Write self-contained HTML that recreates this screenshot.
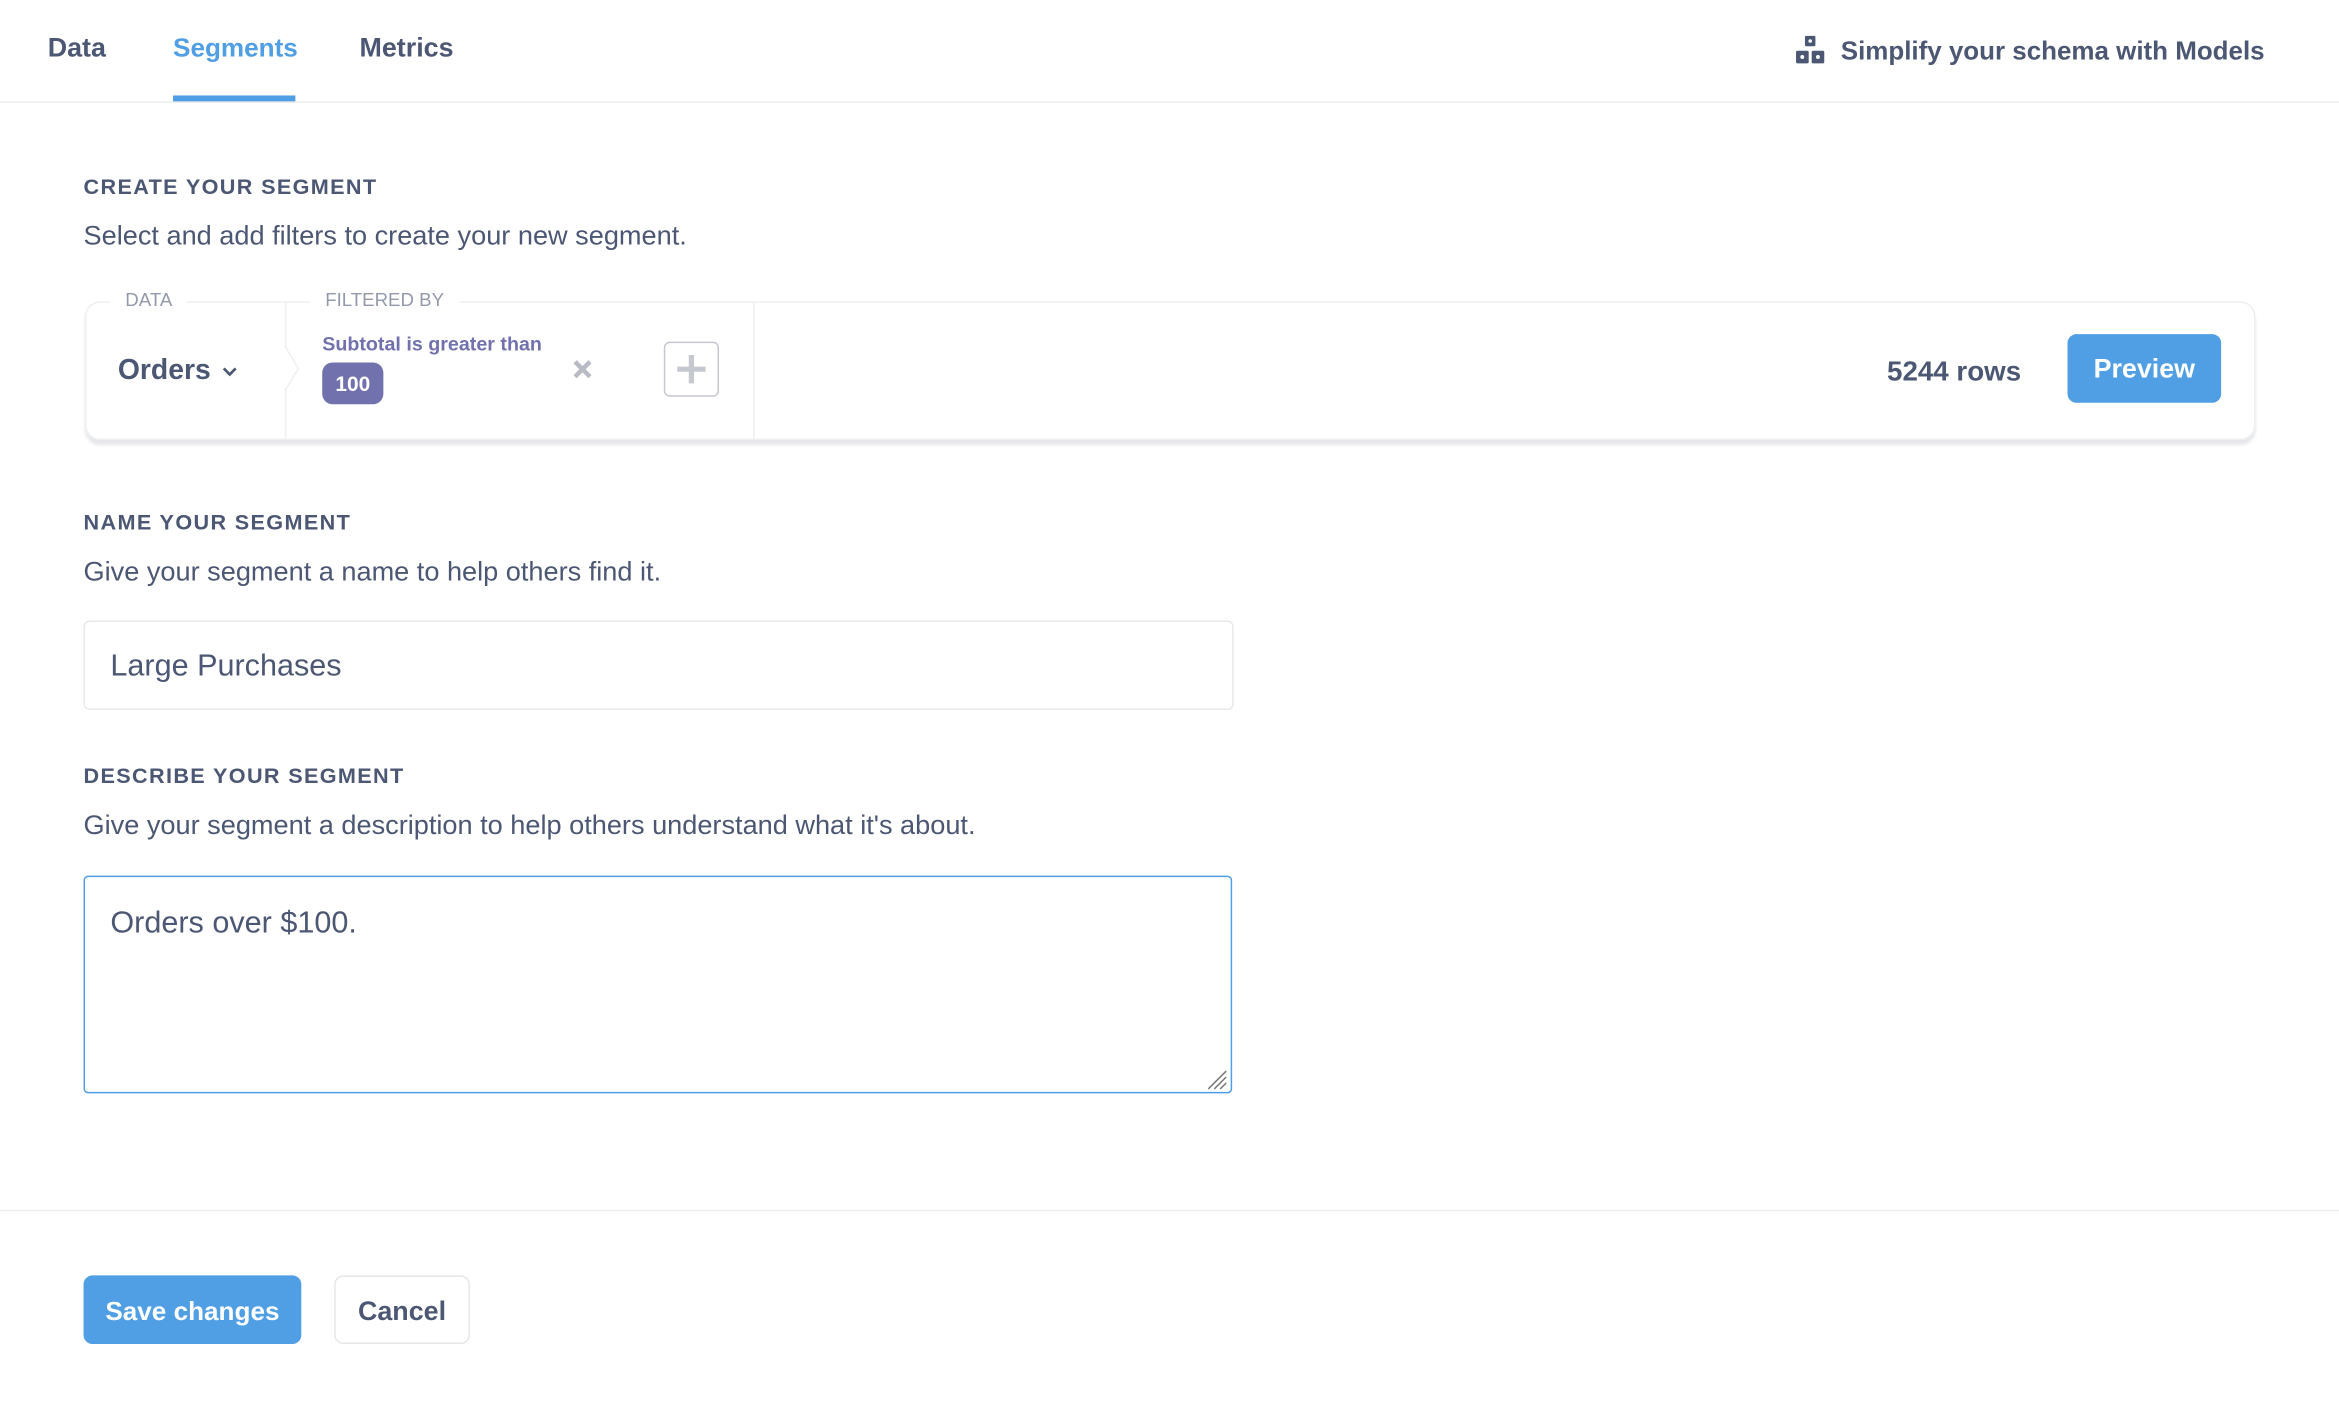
<!DOCTYPE html>
<html><head><meta charset="utf-8"><style>
html,body{margin:0;padding:0;background:#fff;overflow:hidden;width:2339px;height:1410px}
#w{position:absolute;left:0;top:0;width:1568px;height:946px;transform:scale(1.49171);transform-origin:0 0;font-family:"Liberation Sans",sans-serif;color:#4c5773}
.a{position:absolute;white-space:nowrap}
.t{font-size:18px;font-weight:bold;top:22px}
.h{font-size:14.5px;font-weight:bold;letter-spacing:0.9px;left:56px}
.d{font-size:18.2px;left:56px}
.lbl{font-size:12.5px;color:#949aab;background:#fff;padding:0 10px;top:194px}
</style></head><body><div id="w">
<div class="a t" style="left:32px">Data</div>
<div class="a t" style="left:116px;color:#509ee3;font-size:17.5px">Segments</div>
<div class="a" style="left:116px;top:64px;width:82px;height:4px;background:#509ee3"></div>
<div class="a t" style="left:241px">Metrics</div>
<svg class="a" style="left:1204px;top:24px" width="19" height="19" viewBox="0 0 19 19"><rect x="6" y="0" width="7" height="7" rx="1" fill="#4c5773"/><rect x="0" y="10" width="8.5" height="8.5" rx="1" fill="#4c5773"/><rect x="10.5" y="10" width="8.5" height="8.5" rx="1" fill="#4c5773"/><circle cx="9.5" cy="3.5" r="1.2" fill="#fff"/><circle cx="4.2" cy="14.2" r="1.3" fill="#fff"/><circle cx="14.7" cy="14.2" r="1.3" fill="#fff"/></svg>
<div class="a" style="left:1234px;top:24px;font-size:17.4px;font-weight:bold">Simplify your schema with Models</div>
<div class="a" style="left:0;top:68px;width:1568px;height:1px;background:#eceef0"></div>

<div class="a h" style="top:118px">CREATE YOUR SEGMENT</div>
<div class="a d" style="top:148px">Select and add filters to create your new segment.</div>

<div class="a" style="left:57px;top:202px;width:1453px;height:91px;border:1px solid #eeeff1;border-radius:10px;box-shadow:0 3px 2px #e6e7ea"></div>
<div class="a" style="left:191px;top:202px;width:1px;height:92px;background:#eeeff1"></div>
<div class="a" style="left:505px;top:202px;width:1px;height:92px;background:#eeeff1"></div>
<svg class="a" style="left:190px;top:232px" width="12" height="30"><path d="M1 0 L10 15 L1 30" fill="#fff" stroke="#eeeff1"/></svg>
<div class="a lbl" style="left:74px">DATA</div>
<div class="a lbl" style="left:208px">FILTERED BY</div>
<div class="a" style="left:79px;top:238px;font-size:19px;font-weight:bold">Orders</div>
<svg class="a" style="left:149px;top:246px" width="10" height="7"><path d="M1 1 L5 5 L9 1" fill="none" stroke="#4c5773" stroke-width="1.8"/></svg>
<div class="a" style="left:216px;top:223px;font-size:13.2px;font-weight:bold;color:#7172ad">Subtotal is greater than</div>
<div class="a" style="left:216px;top:243px;width:41px;height:28px;border-radius:7px;background:#7172ad;color:#fff;font-size:14px;font-weight:bold;text-align:center;line-height:28px">100</div>
<svg class="a" style="left:384px;top:241px" width="13" height="13"><path d="M1.5 1.5 L11.5 11.5 M11.5 1.5 L1.5 11.5" stroke="#b8bbc3" stroke-width="3"/></svg>
<div class="a" style="left:445px;top:229px;width:35px;height:35px;border:1.5px solid #c5c8cf;border-radius:4px"></div>
<svg class="a" style="left:453px;top:237px" width="21" height="21"><path d="M10.5 1 V20 M1 10.5 H20" stroke="#c5c8cf" stroke-width="3.5"/></svg>
<div class="a" style="left:1265px;top:238px;font-size:18.6px;font-weight:bold">5244 rows</div>
<div class="a" style="left:1386px;top:224px;width:103px;height:46px;border-radius:6px;background:#509ee3;color:#fff;font-size:18px;font-weight:bold;text-align:center;line-height:47px">Preview</div>

<div class="a h" style="top:343px">NAME YOUR SEGMENT</div>
<div class="a d" style="top:373px">Give your segment a name to help others find it.</div>
<div class="a" style="left:56px;top:416px;width:769px;height:58px;border:1px solid #e8e9ec;border-radius:4px"></div>
<div class="a" style="left:74px;top:435px;font-size:20.5px">Large Purchases</div>

<div class="a h" style="top:513px">DESCRIBE YOUR SEGMENT</div>
<div class="a d" style="top:543px">Give your segment a description to help others understand what it's about.</div>
<div class="a" style="left:56px;top:587px;width:768px;height:144px;border:1.5px solid #509ee3;border-radius:3px"></div>
<div class="a" style="left:74px;top:607px;font-size:20.5px">Orders over $100.</div>
<svg class="a" style="left:808px;top:716px" width="16" height="16"><path d="M2 14 L14 2 M6 14 L14 6 M10 14 L14 10" stroke="#777" stroke-width="1"/></svg>

<div class="a" style="left:0;top:811px;width:1568px;height:1px;background:#eceef0"></div>
<div class="a" style="left:56px;top:855px;width:146px;height:46px;border-radius:6px;background:#509ee3;color:#fff;font-size:17.5px;font-weight:bold;text-align:center;line-height:48px">Save changes</div>
<div class="a" style="left:224px;top:855px;width:89px;height:44px;border:1px solid #e4e6e9;border-radius:6px;font-size:18px;font-weight:bold;text-align:center;line-height:46px">Cancel</div>
</div></body></html>
